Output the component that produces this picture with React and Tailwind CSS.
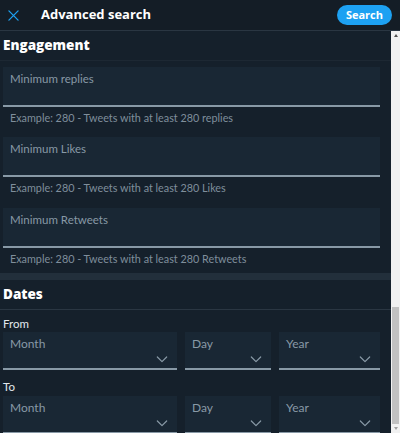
import React from "react";

const font = { fontFamily: '"Open Sans", "Noto Sans", Arial, sans-serif' };
const small = { fontFamily: 'Lato, "Open Sans", Arial, sans-serif' };

function Chevron() {
  return (
    <svg width="16" height="16" viewBox="0 0 24 24" fill="none" stroke="#8899a6" strokeWidth="1.8" strokeLinecap="round" strokeLinejoin="round">
      <path d="M5 9l7 7 7-7" />
    </svg>
  );
}

function TextField({ label, help }) {
  return (
    <div className="flex flex-col" style={small}>
      <div className="h-[40px] bg-[#192734] border-b-2 border-[#8899a6] px-[7px] pt-[3px] text-[11.5px] text-[#8899a6]">
        {label}
      </div>
      <div className="h-[30px] pl-[7px] pt-[3px] text-[10.8px] text-[#7f8e9b]">{help}</div>
    </div>
  );
}

function Select({ label, cls }) {
  return (
    <div className={`h-[38px] bg-[#192734] border-b-2 border-[#8899a6] relative ${cls}`} style={small}>
      <div className="pl-[7px] pt-[3px] text-[12px] text-[#8899a6]">{label}</div>
      <div className="absolute right-[7px] bottom-[1px]"><Chevron /></div>
    </div>
  );
}

function DateRow() {
  return (
    <div className="flex gap-[8px] pl-[3px] pr-[11px]">
      <Select label="Month" cls="w-[174px]" />
      <Select label="Day" cls="w-[86px]" />
      <Select label="Year" cls="flex-1" />
    </div>
  );
}

export default function App() {
  return (
    <div className="w-[400px] h-[433px] overflow-hidden bg-[#15202b] flex flex-col" style={font}>
      <div className="h-[31px] shrink-0 flex items-center border-b border-[#2a3642] bg-[#141d26]">
        <svg className="ml-[8px]" width="11" height="11" viewBox="0 0 12 12" stroke="#1da1f2" strokeWidth="1.4" strokeLinecap="round">
          <path d="M1 1l10 10M11 1L1 11" />
        </svg>
        <div className="ml-[22px] text-[13px] font-bold text-white">Advanced search</div>
        <div className="ml-auto mr-[8px] h-[20px] px-[9px] rounded-full bg-[#1da1f2] text-white text-[11px] font-bold flex items-center">Search</div>
      </div>
      <div className="flex flex-1 min-h-0">
        <div className="flex-1 flex flex-col">
          <div className="h-[30px] shrink-0 flex items-center pl-[3px] border-b border-[#1d2833] text-[13.5px] font-extrabold text-white">Engagement</div>
          <div className="pt-[6px] pl-[3px] pr-[11px] flex flex-col">
            <TextField label="Minimum replies" help="Example: 280 - Tweets with at least 280 replies" />
            <TextField label="Minimum Likes" help="Example: 280 - Tweets with at least 280 Likes" />
            <div className="h-[1px]" />
            <TextField label="Minimum Retweets" help="Example: 280 - Tweets with at least 280 Retweets" />
          </div>
          <div className="h-[7px] shrink-0 bg-[#222f3b] -mt-[5px]" />
          <div className="h-[30px] shrink-0 flex items-center pl-[3px] border-b border-[#2a3642] text-[13.5px] font-extrabold text-white">Dates</div>
          <div className="h-[23px] pl-[3px] pt-[5px] text-[11.5px] text-[#e1e8ed]" style={small}>From</div>
          <DateRow />
          <div className="h-[27px] pl-[3px] pt-[8px] text-[11.5px] text-[#e1e8ed]" style={small}>To</div>
          <DateRow />
        </div>
        <div className="w-[9px] shrink-0 bg-[#f1f1f1] flex flex-col">
          <div className="h-[9px] flex items-center justify-center">
            <div className="w-0 h-0 border-l-[2.5px] border-r-[2.5px] border-b-[3px] border-l-transparent border-r-transparent border-b-[#505050]" />
          </div>
          <div className="h-[267px]" />
          <div className="flex-1 mx-[1px] bg-[#c1c1c1]" />
          <div className="h-[9px] flex items-center justify-center">
            <div className="w-0 h-0 border-l-[2.5px] border-r-[2.5px] border-t-[3px] border-l-transparent border-r-transparent border-t-[#a0a0a0]" />
          </div>
        </div>
      </div>
    </div>
  );
}
